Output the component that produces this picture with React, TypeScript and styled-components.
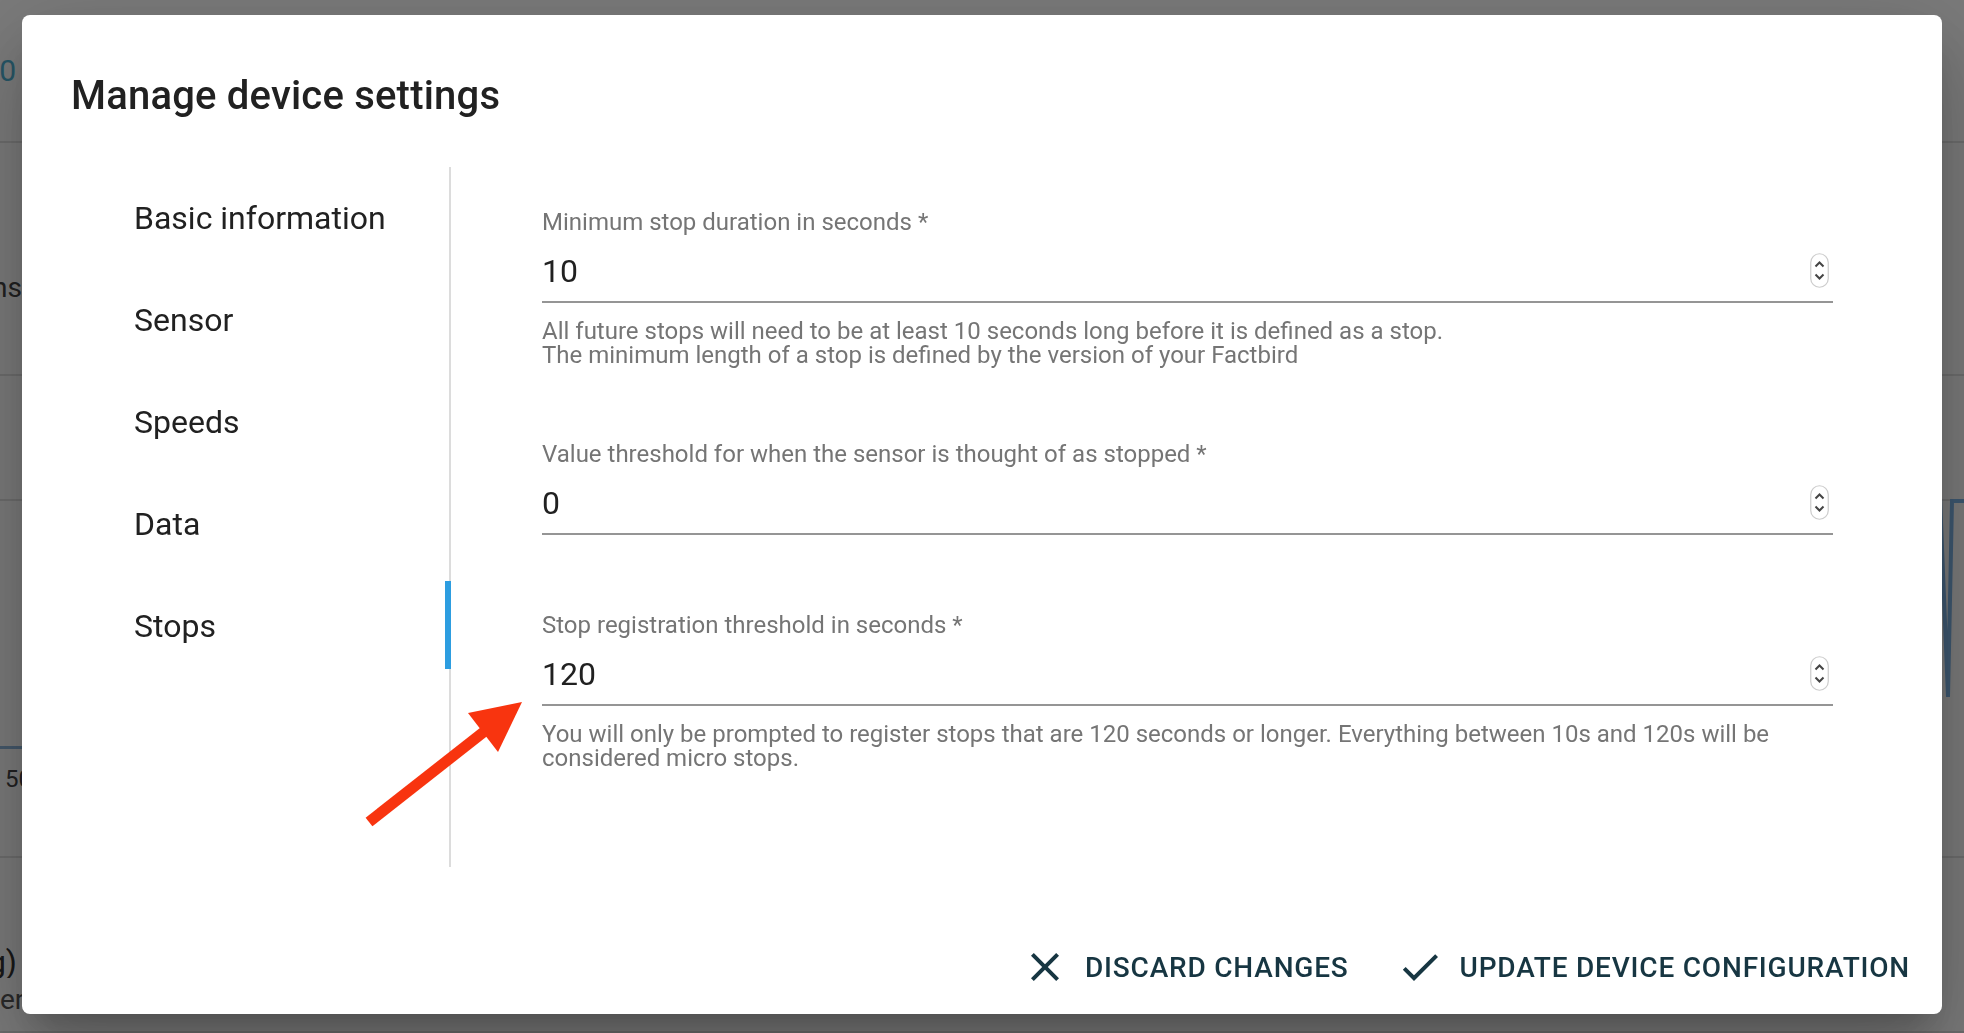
import React from "react";
import styled, { createGlobalStyle } from "styled-components";

const GlobalStyle = createGlobalStyle`
  html, body { margin: 0; padding: 0; width: 100%; height: 100%; overflow: hidden; }
  body { font-family: Roboto, "Liberation Sans", Arial, sans-serif; background: #ffffff; }
  * { box-sizing: border-box; }
`;

/* ---------- background page (dimmed behind the dialog) ---------- */
const Page = styled.div`
  width: 100vw;
  height: 100vh;
  display: flex;
  flex-direction: column;
  background: #ffffff;
`;

const PageRow = styled.div<{ $h: number }>`
  height: ${(p) => p.$h}px;
  flex: none;
  display: flex;
  align-items: flex-start;
  justify-content: space-between;
  border-bottom: 2px solid #e2e2e2;
`;

const Fragment = styled.div<{ $w: number; $top: number; $size: number; $color?: string; $tail?: boolean; $left?: number }>`
  width: ${(p) => p.$w}px;
  margin-top: ${(p) => p.$top}px;
  padding-left: ${(p) => p.$left || 0}px;
  font-size: ${(p) => p.$size}px;
  line-height: 1;
  color: ${(p) => p.$color || "#333"};
  white-space: nowrap;
  overflow: hidden;
  direction: ${(p) => (p.$tail ? "rtl" : "ltr")};
  text-align: left;
`;

const ChartBox = styled.div`
  width: 42px;
  height: 228px;
  margin-left: -2px;
  margin-top: 20px;
  border: 3px solid #8fb8df;
  border-top: none;
  border-left: none;
  border-bottom-right-radius: 8px;
`;

const RightChart = styled.svg`
  display: block;
  margin-top: -4px;
`;

/* ---------- dialog ---------- */
const Backdrop = styled.div`
  position: fixed;
  inset: 0;
  background: rgba(0, 0, 0, 0.52);
  display: flex;
  padding: 15px 22px 19px 22px;
`;

const Dialog = styled.div`
  position: relative;
  flex: 1;
  background: #ffffff;
  border-radius: 8px;
  display: flex;
  flex-direction: column;
  box-shadow: 0 22px 30px -14px rgba(0, 0, 0, 0.2), 0 48px 76px 6px rgba(0, 0, 0, 0.14),
    0 18px 92px 16px rgba(0, 0, 0, 0.12);
`;

const Title = styled.h2`
  margin: 0;
  padding: 49px 48px 0 49px;
  font-family: Roboto, "Liberation Sans", Arial, sans-serif;
  font-weight: 500;
  font-size: 40px;
  line-height: 64px;
  letter-spacing: 0.2px;
  color: #212121;
`;

const Body = styled.div`
  display: flex;
  margin-top: 39px;
  height: 700px;
  flex: none;
`;

const Nav = styled.nav`
  width: 429px;
  flex: none;
  border-right: 2px solid #dcdcdc;
  display: flex;
  flex-direction: column;
  gap: 14px;
  padding-top: 7px;
`;

const Tab = styled.div`
  position: relative;
  height: 88px;
  display: flex;
  align-items: center;
  padding-left: 112px;
  font-size: 32px;
  font-weight: 400;
  color: #212121;
`;

const Indicator = styled.span`
  position: absolute;
  top: -1px;
  right: -2px;
  width: 6px;
  height: 88px;
  background: #2d9de0;
`;

const Content = styled.div`
  flex: 1;
  padding: 43px 109px 0 91px;
  display: flex;
  flex-direction: column;
`;

const Field = styled.div<{ $plain?: boolean }>`
  display: flex;
  flex-direction: column;
  margin-bottom: ${(p) => (p.$plain ? 3 : 0)}px;
  & + & {
    margin-top: 75px;
  }
`;

const Label = styled.label`
  font-size: 24px;
  line-height: 24px;
  color: #757575;
`;

const InputRow = styled.div`
  margin-top: 18px;
  display: flex;
  align-items: center;
  padding-bottom: 11px;
  border-bottom: 2px solid #959595;
`;

const Value = styled.div`
  flex: 1;
  font-size: 32px;
  line-height: 38px;
  color: #212121;
`;

const Spinner = styled.svg`
  display: block;
  margin-right: 4px;
  margin-top: -2px;
`;

const Helper = styled.p`
  margin: 16px 0 0 0;
  font-size: 24px;
  line-height: 24px;
  color: #757575;
`;

const Actions = styled.div`
  flex: 1;
  display: flex;
  justify-content: flex-end;
  align-items: flex-end;
  gap: 23px;
  padding: 0 16px 11px 0;
`;

const Button = styled.button`
  display: inline-flex;
  align-items: center;
  border: none;
  background: transparent;
  padding: 12px 16px;
  font-family: Roboto, "Liberation Sans", Arial, sans-serif;
  font-weight: 500;
  font-size: 28px;
  letter-spacing: 0.8px;
  text-transform: uppercase;
  color: #173642;
  cursor: pointer;
`;

const ButtonIcon = styled.svg`
  display: block;
  width: 48px;
  height: 48px;
  margin-left: -8px;
  margin-right: 16px;
  fill: currentColor;
`;

const Arrow = styled.svg`
  position: absolute;
  left: 318px;
  top: 675px;
  pointer-events: none;
`;

function SpinnerIcon() {
  return (
    <Spinner width="19" height="35" viewBox="0 0 19 35">
      <rect x="0.75" y="0.75" width="17.5" height="33.5" rx="8.75" fill="#fff" stroke="#cccccc" strokeWidth="1.2" />
      <polyline points="5.5,13.5 9.5,9.5 13.5,13.5" fill="none" stroke="#444" strokeWidth="2" />
      <polyline points="5.5,21.5 9.5,25.5 13.5,21.5" fill="none" stroke="#444" strokeWidth="2" />
    </Spinner>
  );
}

type FieldDef = { label: string; value: string; helper?: string[] };

const fields: FieldDef[] = [
  {
    label: "Minimum stop duration in seconds *",
    value: "10",
    helper: [
      "All future stops will need to be at least 10 seconds long before it is defined as a stop.",
      "The minimum length of a stop is defined by the version of your Factbird",
    ],
  },
  { label: "Value threshold for when the sensor is thought of as stopped *", value: "0" },
  {
    label: "Stop registration threshold in seconds *",
    value: "120",
    helper: [
      "You will only be prompted to register stops that are 120 seconds or longer. Everything between 10s and 120s will be considered micro stops.",
    ],
  },
];

const tabs = ["Basic information", "Sensor", "Speeds", "Data", "Stops"];

export default function App() {
  return (
    <>
      <GlobalStyle />
      <Page>
        <PageRow $h={143}>
          <Fragment $w={16} $top={56} $size={30} $color="#4fb2d4" $tail>10</Fragment>
        </PageRow>
        <PageRow $h={233}>
          <Fragment $w={22} $top={131} $size={28} $color="#444" $tail>Revolutions</Fragment>
        </PageRow>
        <PageRow $h={125} />
        <PageRow $h={357}>
          <div>
            <ChartBox />
            <Fragment $w={40} $top={18} $size={24} $color="#444" $left={5}>50</Fragment>
          </div>
          <RightChart width="24" height="210" viewBox="0 0 24 210">
            <polyline points="0,0 8,200 12,4 24,4" fill="none" stroke="#7fb6ea" strokeWidth="4" />
          </RightChart>
        </PageRow>
        <PageRow $h={175}>
          <div>
            <Fragment $w={17} $top={88} $size={32} $color="#333" $tail>(kg)</Fragment>
            <Fragment $w={40} $top={8} $size={28} $color="#555">ency</Fragment>
          </div>
        </PageRow>
      </Page>

      <Backdrop>
        <Dialog>
          <Title>Manage device settings</Title>
          <Body>
            <Nav>
              {tabs.map((t) => (
                <Tab key={t}>
                  {t}
                  {t === "Stops" && <Indicator />}
                </Tab>
              ))}
            </Nav>
            <Content>
              {fields.map((f) => (
                <Field key={f.label} $plain={!f.helper}>
                  <Label>{f.label}</Label>
                  <InputRow>
                    <Value>{f.value}</Value>
                    <SpinnerIcon />
                  </InputRow>
                  {f.helper && (
                    <Helper>
                      {f.helper.map((h, i) => (
                        <React.Fragment key={i}>
                          {i > 0 && <br />}
                          {h}
                        </React.Fragment>
                      ))}
                    </Helper>
                  )}
                </Field>
              ))}
            </Content>
          </Body>
          <Actions>
            <Button>
              <ButtonIcon viewBox="0 0 24 24">
                <path d="M19 6.41 17.59 5 12 10.59 6.41 5 5 6.41 10.59 12 5 17.59 6.41 19 12 13.41 17.59 19 19 17.59 13.41 12z" />
              </ButtonIcon>
              Discard changes
            </Button>
            <Button>
              <ButtonIcon viewBox="0 0 24 24">
                <path d="M9 16.17 4.83 12l-1.42 1.41L9 19 21 7l-1.41-1.41z" />
              </ButtonIcon>
              Update device configuration
            </Button>
          </Actions>
          <Arrow width="200" height="160" viewBox="0 0 200 160">
            <line x1="29" y1="132" x2="150" y2="37" stroke="#f8340f" strokeWidth="11" />
            <polygon points="182,12 128,23 158,62" fill="#f8340f" />
          </Arrow>
        </Dialog>
      </Backdrop>
    </>
  );
}
